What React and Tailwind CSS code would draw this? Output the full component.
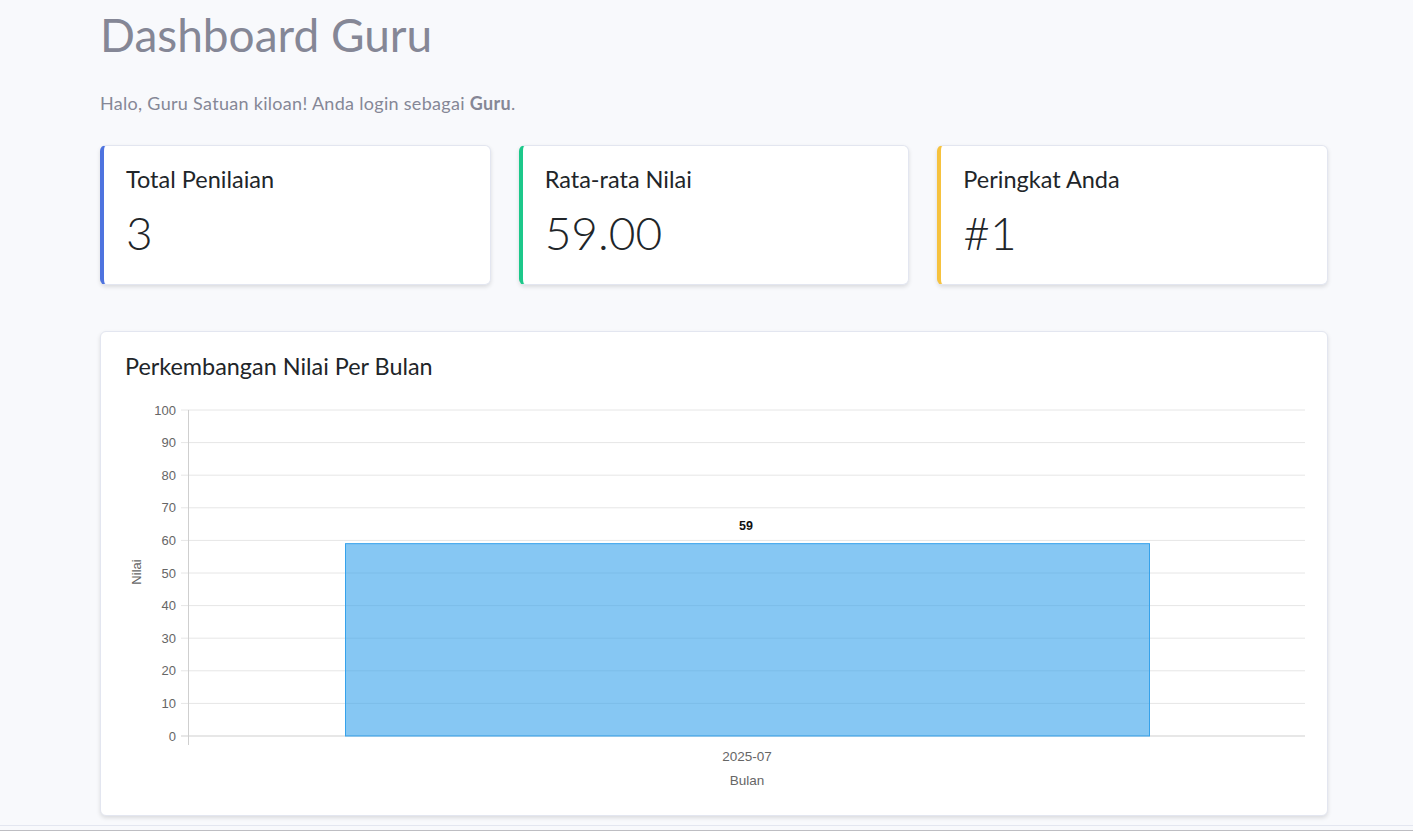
import React from "react";

const font = { fontFamily: "Lato, 'Noto Sans', sans-serif" };
const chartFont = "'Liberation Sans', Arial, sans-serif";

function StatCard({ title, value, color }) {
  return (
    <div
      className={`flex-1 h-[140px] bg-white rounded-md border border-[#e3e6f0] border-l-4 ${color} shadow-[0_2px_4px_rgba(0,0,0,0.12)] pl-[22px] pr-6 pt-[19px]`}
    >
      <div className="text-[23.5px] leading-[1.2] text-[#212529]">{title}</div>
      <div className="mt-[12px] text-[46px] leading-[1.2] font-light text-[#212529]">{value}</div>
    </div>
  );
}

function Chart() {
  const W = 1180;
  const H = 400;
  const y0 = 341;
  const k = 3.26;
  const ticks = [0, 10, 20, 30, 40, 50, 60, 70, 80, 90, 100];
  return (
    <svg width={W} height={H} viewBox={`0 0 ${W} ${H}`} className="block">
      {ticks.map((t) => {
        const y = y0 - t * k;
        return (
          <g key={t}>
            <line
              x1={56}
              x2={1181}
              y1={y}
              y2={y}
              stroke={t === 0 ? "#cfcfcf" : "#e6e6e6"}
              strokeWidth={1}
            />
            <text x={51} y={y + 4.5} textAnchor="end" fontSize="13" fill="#666" fontFamily={chartFont}>
              {t}
            </text>
          </g>
        );
      })}
      <line x1={63.5} x2={63.5} y1={15} y2={350} stroke="#cfcfcf" strokeWidth={1} />
      <rect
        x={220.5}
        y={y0 - 59 * k}
        width={804}
        height={59 * k}
        fill="rgba(54,162,235,0.6)"
        stroke="rgb(54,162,235)"
        strokeWidth={1}
      />
      <text x={621} y={135} textAnchor="middle" fontSize="12.5" fontWeight="bold" fill="#111" fontFamily={chartFont}>
        59
      </text>
      <text x={622} y={366} textAnchor="middle" fontSize="13.5" fill="#666" fontFamily={chartFont}>
        2025-07
      </text>
      <text x={622} y={390} textAnchor="middle" fontSize="13.5" fill="#666" fontFamily={chartFont}>
        Bulan
      </text>
      <text
        x={0}
        y={0}
        transform="translate(16 177) rotate(-90)"
        textAnchor="middle"
        fontSize="13"
        fill="#666"
        fontFamily={chartFont}
      >
        Nilai
      </text>
    </svg>
  );
}

export default function App() {
  return (
    <div className="h-[831px] bg-[#f8f9fc] flex flex-col overflow-hidden" style={font}>
      <div className="flex-1 pl-[100px] pr-[85px] pt-1">
        <h1 className="text-[46px] leading-[1.2] text-[#858796] font-normal pt-[3px]">Dashboard Guru</h1>
        <p className="mt-[28px] text-[18px] leading-[1.5] tracking-[0.3px] text-[#858796]">
          Halo, Guru Satuan kiloan! Anda login sebagai <b className="font-bold">Guru</b>.
        </p>
        <div className="mt-[28px] flex gap-[28px]">
          <StatCard title="Total Penilaian" value="3" color="border-l-[#4e73df]" />
          <StatCard title="Rata-rata Nilai" value="59.00" color="border-l-[#1cc88a]" />
          <StatCard title="Peringkat Anda" value="#1" color="border-l-[#f6c23e]" />
        </div>
        <div className="mt-[46px] bg-white rounded-md border border-[#e3e6f0] shadow-[0_2px_4px_rgba(0,0,0,0.12)] px-6 pt-5 pb-[20px]">
          <h4 className="text-[23.4px] leading-[1.2] text-[#212529]">Perkembangan Nilai Per Bulan</h4>
          <div className="mt-[15px]">
            <Chart />
          </div>
        </div>
      </div>
      <div className="h-[6px] border-t border-[#e3e6f0] border-b border-b-[#bdbdc2] bg-[#f8f9fc]" />
    </div>
  );
}
